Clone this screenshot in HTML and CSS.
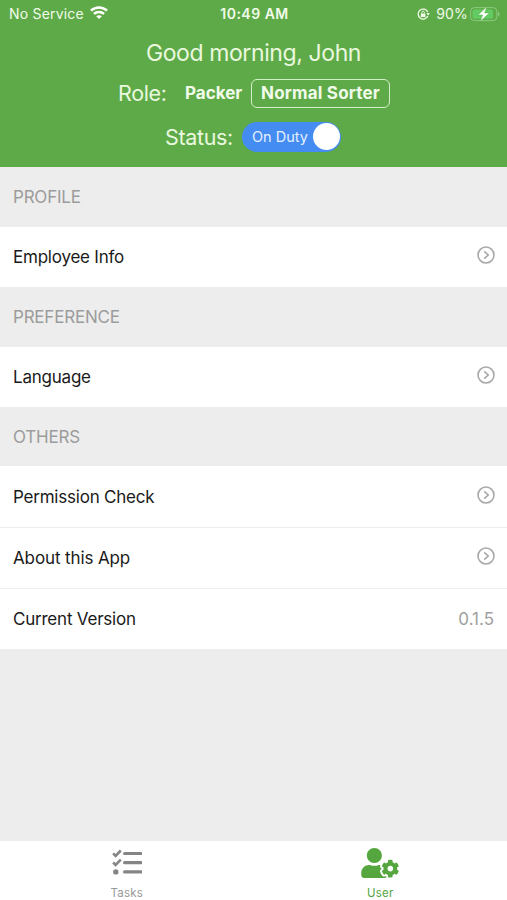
FILE: index.html
```html
<!DOCTYPE html>
<html lang="en">
<head>
<meta charset="utf-8">
<title>User</title>
<link rel="stylesheet" href="styles.css">
</head>
<body>
<svg class="defs" width="0" height="0">
  <symbol id="chevron" viewBox="0 0 18 18">
    <circle cx="9" cy="9" r="8" fill="none" stroke="currentColor" stroke-width="1.6"/>
    <path d="M7.2 5.4L11.2 9l-4 3.6" fill="none" stroke="currentColor" stroke-width="1.6"/>
  </symbol>
</svg>
<div class="screen">
  <header class="header">
    <div class="statusbar">
      <div class="carrier">
        <span class="carrier-name">No Service</span>
        <svg class="wifi" viewBox="0 0 18 13" width="18" height="13">
          <g fill="none" stroke="currentColor" stroke-width="2.5">
            <path d="M.9 4.6C5.5.3 12.5.3 17.1 4.6"/>
            <path d="M3.9 7.9c2.9-2.7 7.3-2.7 10.2 0"/>
          </g>
          <path d="M9 13L6.2 10.2c1.6-1.4 4-1.4 5.6 0z" fill="currentColor"/>
        </svg>
      </div>
      <div class="clock">10:49 AM</div>
      <div class="power">
        <svg class="lock" viewBox="0 0 13 12" width="13" height="12">
          <path d="M10.8 4.1A5 5 0 1 0 10.8 8" fill="none" stroke="currentColor" stroke-width="1.3"/>
          <path d="M9.2 5.1h3.7L11.2 7.6z" fill="currentColor"/>
          <rect x="3.8" y="5.4" width="4.6" height="3.5" rx=".5" fill="currentColor"/>
          <path d="M4.8 5.6V4.5a1.3 1.3 0 0 1 2.6 0v1.1" fill="none" stroke="currentColor" stroke-width=".9"/>
        </svg>
        <span class="percent">90%</span>
        <svg class="battery" viewBox="0 0 30 16" width="30" height="16">
          <rect x=".6" y="1.6" width="26.3" height="13" rx="3.8" fill="none" stroke="#8ccb7f" stroke-width="1"/>
          <rect x="2.5" y="3.4" width="20.5" height="9.4" rx="2.2" fill="#62cb63"/>
          <path d="M28 5.8c2 .6 2 4 0 4.6z" fill="#8ccb7f"/>
          <path d="M16.8 .8L8 9h4.6l-2.4 6.4 9.2-8.5h-4.8z" fill="#fff" stroke="#5fae4b" stroke-width=".5"/>
        </svg>
      </div>
    </div>
    <h1 class="greeting">Good morning, John</h1>
    <div class="role">
      <span class="label">Role:</span>
      <span class="role-name packer">Packer</span>
      <span class="role-name selected">Normal Sorter</span>
    </div>
    <div class="status">
      <span class="label">Status:</span>
      <div class="switch"><span class="switch-text">On Duty</span><span class="knob"></span></div>
    </div>
  </header>
  <main class="content">
    <h2 class="section">PROFILE</h2>
    <div class="row"><span>Employee Info</span><svg class="chevron"><use href="#chevron"/></svg></div>
    <h2 class="section">PREFERENCE</h2>
    <div class="row"><span>Language</span><svg class="chevron"><use href="#chevron"/></svg></div>
    <h2 class="section">OTHERS</h2>
    <div class="row divided"><span>Permission Check</span><svg class="chevron"><use href="#chevron"/></svg></div>
    <div class="row divided"><span class="about">About this App</span><svg class="chevron"><use href="#chevron"/></svg></div>
    <div class="row"><span>Current Version</span><span class="version">0.1.5</span></div>
  </main>
  <nav class="tabs">
    <div class="tab">
      <svg viewBox="0 0 30 27" width="30" height="27">
        <g fill="none" stroke="currentColor">
          <path d="M12.6 4.5H29M12.6 13.7H29M12.6 22.9H29" stroke-width="3.2" stroke-linecap="round"/>
          <path d="M1.1 4.4l2.5 2.4L8.8 1.5M1.1 13.5l2.5 2.4 5.2-5.3" stroke-width="2.6"/>
        </g>
        <circle cx="3.8" cy="22.9" r="2.7" fill="currentColor"/>
      </svg>
      <span class="tab-label">Tasks</span>
    </div>
    <div class="tab active">
      <svg viewBox="0 0 640 512" width="38" height="30">
        <path fill="currentColor" d="M610.5 373.3c2.6-14.1 2.6-28.5 0-42.6l25.8-14.9c3-1.7 4.3-5.2 3.3-8.5-6.7-21.6-18.2-41.2-33.2-57.4-2.3-2.5-6-3.1-9-1.4l-25.8 14.9c-10.9-9.3-23.4-16.5-36.9-21.3v-29.8c0-3.4-2.4-6.4-5.7-7.1-22.3-5-45-4.8-66.2 0-3.3.7-5.7 3.7-5.7 7.1v29.8c-13.5 4.8-26 12-36.9 21.3l-25.8-14.9c-2.9-1.7-6.7-1.1-9 1.4-15 16.2-26.5 35.8-33.2 57.4-1 3.3.4 6.8 3.3 8.5l25.8 14.9c-2.6 14.1-2.6 28.5 0 42.6l-25.8 14.9c-3 1.7-4.3 5.2-3.3 8.5 6.7 21.6 18.2 41.1 33.2 57.4 2.3 2.5 6 3.1 9 1.4l25.8-14.9c10.9 9.3 23.4 16.5 36.9 21.3v29.8c0 3.4 2.4 6.4 5.7 7.1 22.3 5 45 4.8 66.2 0 3.3-.7 5.7-3.7 5.7-7.1v-29.8c13.5-4.8 26-12 36.9-21.3l25.8 14.9c2.9 1.7 6.7 1.1 9-1.4 15-16.2 26.5-35.8 33.2-57.4 1-3.3-.4-6.8-3.3-8.5l-25.8-14.9zM496 400.5c-26.8 0-48.5-21.8-48.5-48.5s21.8-48.5 48.5-48.5 48.5 21.8 48.5 48.5-21.7 48.5-48.5 48.5zM224 256c70.7 0 128-57.3 128-128S294.7 0 224 0 96 57.3 96 128s57.3 128 128 128zm201.2 226.5c-2.3-1.2-4.6-2.6-6.8-3.9l-7.9 4.6c-6 3.4-12.8 5.3-19.6 5.3-10.9 0-21.4-4.6-28.9-12.6-18.3-19.8-32.3-43.9-40.2-69.6-5.5-17.7 1.9-36.4 17.9-45.7l7.9-4.6c-.1-2.6-.1-5.2 0-7.8l-7.9-4.6c-16-9.2-23.4-28-17.9-45.7.9-2.9 2.2-5.8 3.2-8.7-3.8-.3-7.5-1.2-11.4-1.2h-16.7c-22.2 10.2-46.9 16-72.9 16s-50.6-5.8-72.9-16h-16.7C60.2 288 0 348.2 0 422.4V464c0 26.5 21.5 48 48 48h352c10.1 0 19.5-3.2 27.2-8.5-1.2-3.8-2-7.7-2-11.8v-9.2z"/>
      </svg>
      <span class="tab-label">User</span>
    </div>
  </nav>
</div>
</body>
</html>
```
FILE: styles.css
```css
* { box-sizing: border-box; }
body {
  margin: 0;
  font-family: Inter, "Liberation Sans", sans-serif;
  white-space: nowrap;
}
.defs { position: absolute; }
.screen {
  width: 507px;
  height: 900px;
  display: flex;
  flex-direction: column;
  background: #ededed;
  overflow: hidden;
}
.header {
  height: 167px;
  flex: none;
  background: #5faa48;
  color: #f1fbea;
}
.statusbar {
  height: 27px;
  padding: 0 7px 0 9px;
  display: grid;
  grid-template-columns: 1fr auto 1fr;
  align-items: center;
  font-size: 14px;
}
.carrier, .power { display: flex; align-items: center; }
.carrier { gap: 6px; }
.carrier-name { letter-spacing: .2px; }
.wifi { margin-top: -2px; color: #fff; }
.clock { font-weight: 600; letter-spacing: .5px; }
.power { justify-content: flex-end; }
.lock { margin-right: 6px; }
.percent { margin-right: 2px; letter-spacing: .2px; }
.greeting {
  margin: 9px 0 0;
  height: 34px;
  line-height: 34px;
  font-size: 23px;
  font-weight: 400;
  letter-spacing: -.4px;
  text-align: center;
  color: #e9f8df;
}
.role {
  height: 44px;
  padding-left: 118px;
  display: flex;
  align-items: center;
  padding-top: 2px;
}
.label {
  flex: none;
  width: 49px;
  font-size: 21.5px;
  font-weight: 400;
  letter-spacing: -.35px;
  color: #e9f8df;
}
.role-name { font-size: 17px; font-weight: 700; }
.packer { margin-left: 18px; width: 58px; }
.selected {
  margin-left: 8px;
  width: 139px;
  height: 29px;
  line-height: 26px;
  letter-spacing: .2px;
  border: 1.5px solid #d5efc8;
  border-radius: 6px;
  text-align: center;
}
.status {
  height: 44px;
  padding: 1px 0 0 165px;
  display: flex;
  align-items: center;
}
.status .label { width: 69px; }
.switch {
  margin-left: 8px;
  width: 99px;
  height: 30px;
  padding: 0 1px 0 10px;
  display: flex;
  align-items: center;
  justify-content: space-between;
  border-radius: 15px;
  background: #458cf2;
}
.switch-text { font-size: 14.5px; color: #e4f0ff; }
.knob { width: 27px; height: 27px; border-radius: 50%; background: #fff; }
.content { flex: 1; }
.section {
  margin: 0;
  height: 59.7px;
  padding-left: 13px;
  line-height: 60px;
  font-size: 17px;
  font-weight: 400;
  letter-spacing: -.22px;
  color: #9c9c9c;
}
.row {
  height: 60.2px;
  padding: 0 12px 0 13px;
  display: flex;
  align-items: center;
  justify-content: space-between;
  background: #fff;
  font-size: 17px;
  letter-spacing: -.22px;
  color: #1a1a1a;
}
.about { letter-spacing: -.12px; }
.divided { height: 61.2px; border-bottom: 1px solid #ededed; }
.chevron { width: 18px; height: 18px; margin-top: -4px; color: #a8a8a8; }
.version { color: #a0a0a0; letter-spacing: 0; margin-right: 1px; }
.tabs {
  height: 59px;
  display: grid;
  grid-template-columns: 1fr 1fr;
  background: #fff;
}
.tab {
  display: flex;
  flex-direction: column;
  align-items: center;
  justify-content: space-between;
  padding: 8px 0 0;
  color: #858585;
}
.tab svg { flex: none; }
.active { padding-top: 7px; }
.tab-label { height: 16px; line-height: 18px; font-size: 11.5px; letter-spacing: .2px; color: #999; }
.active, .active .tab-label { color: #55a63f; }
```
